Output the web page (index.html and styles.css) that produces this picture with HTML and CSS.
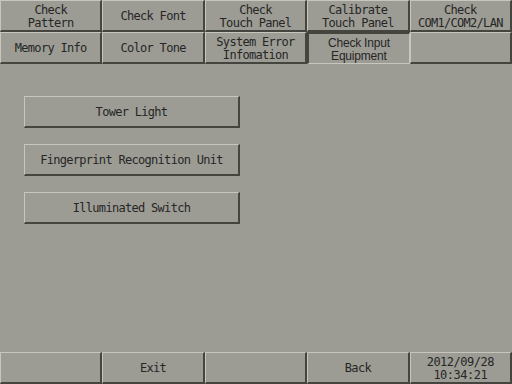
FILE: index.html
```html
<!DOCTYPE html>
<html lang="en">
  <head>
    <meta charset="UTF-8" />
    <title>Check Input Equipment</title>
    <link rel="stylesheet" href="styles.css">
  </head>
  <body>
    <div class="screen">
      <div class="tabs">
        <button class="btn">Check<br>Pattern</button>
        <button class="btn">Check Font</button>
        <button class="btn">Check<br>Touch Panel</button>
        <button class="btn">Calibrate<br>Touch Panel</button>
        <button class="btn">Check<br>COM1/COM2/LAN</button>
        <button class="btn">Memory Info</button>
        <button class="btn">Color Tone</button>
        <button class="btn">System Error<br>Infomation</button>
        <button class="btn btn--active">Check Input<br>Equipment</button>
        <button class="btn"></button>
      </div>

      <div class="menu">
        <button class="btn menu__item">Tower Light</button>
        <button class="btn menu__item">Fingerprint Recognition Unit</button>
        <button class="btn menu__item">Illuminated Switch</button>
      </div>

      <div class="footer">
        <button class="btn"></button>
        <button class="btn">Exit</button>
        <button class="btn"></button>
        <button class="btn">Back</button>
        <div class="btn clock">2012/09/28<br>10:34:21</div>
      </div>
    </div>
  </body>
</html>
```

FILE: styles.css
```css
body {
  margin: 0;
  background: #9c9c94;
}

.screen {
  width: 512px;
  height: 384px;
  display: flex;
  flex-direction: column;
  background: #9c9c94;
}

.btn {
  box-sizing: border-box;
  margin: 0;
  padding: 2px 0 0 0;
  display: flex;
  justify-content: center;
  align-items: center;
  text-align: center;
  background: #9c9c94;
  color: #262626;
  font-family: "DejaVu Sans Mono", "Liberation Mono", monospace;
  font-size: 12px;
  letter-spacing: -0.7px;
  line-height: 13px;
  border-style: solid;
  border-width: 1px 2px 2px 1px;
  border-color: #c6c6be #45453f #45453f #c6c6be;
}

.tabs {
  display: grid;
  grid-template-columns: repeat(5, 1fr);
  grid-template-rows: 32px 32px;
}

.btn--active {
  border-width: 2px 1px 1px 2px;
  border-color: #45453f #c6c6be #c6c6be #45453f;
  font-family: "Liberation Sans", Arial, sans-serif;
  font-size: 12px;
  letter-spacing: -0.2px;
  word-spacing: 0;
  line-height: 13px;
  padding-top: 2px;
}

.menu {
  display: flex;
  flex-direction: column;
  gap: 16px;
  padding: 32px 0 0 24px;
}

.menu__item {
  width: 216px;
  height: 32px;
}

.footer {
  margin-top: auto;
  display: grid;
  grid-template-columns: repeat(5, 1fr);
  height: 32px;
}

.clock {
  letter-spacing: -0.5px;
}
```
